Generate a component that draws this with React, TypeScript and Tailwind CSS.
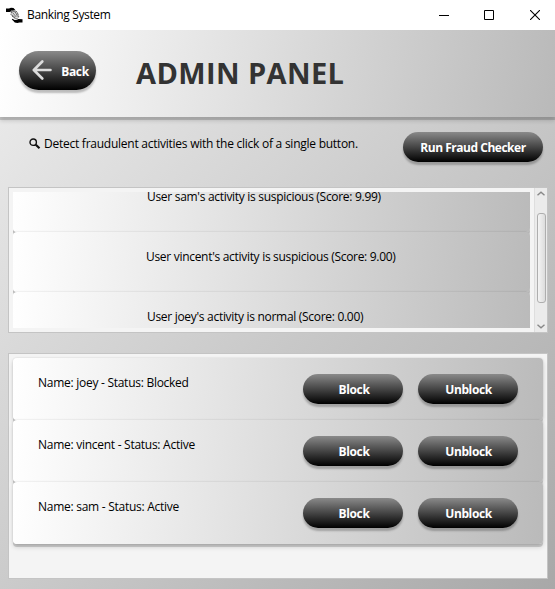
import React from 'react';

const pill =
  'flex shrink-0 items-center justify-center rounded-full bg-[linear-gradient(#8a8a8a,#000)] pt-[2px] font-bold leading-4 text-white shadow-[0_3px_2px_rgba(0,0,0,0.24)] whitespace-nowrap';

const rowShadow = 'shadow-[0_3px_0_rgba(0,0,0,0.15),0_3px_5px_rgba(0,0,0,0.16),0_0_2px_rgba(0,0,0,0.14)]';

function ArrowLeft() {
  return (
    <svg className="-mt-[3px]" width="20" height="20" viewBox="0 0 20 20" fill="none" stroke="#dcdcdc" strokeWidth="2.6" strokeLinecap="round" strokeLinejoin="round">
      <path d="M18.5 10H2M10.3 1.5 1.8 10l8.5 8.5" />
    </svg>
  );
}

function AppIcon() {
  return (
    <svg width="17" height="17" viewBox="0 0 17 17">
      <path d="M0 1.5h3l2-.8 2.5.3 1.8 2-1.3.8-2.5-.4-1 1.4L3.5 5H0z" fill="#000" />
      <path d="M5.5 4.5 8.5 3l2.8 2.3 1.5 4.5-2 2-3.3-1.2L5 7.5z" fill="#ddd" stroke="#333" strokeWidth=".8" strokeDasharray="2 .6" />
      <path d="m6.5 5.5 3.8 4.5M9 4.5l2.6 5M6 8l3 2.5M7 4.5l2.5.5" fill="none" stroke="#444" strokeWidth=".7" />
      <path d="m6.5 11.8 2.2 1.2 2.2-.2 1.5-.8 4.1.2v3.3h-3l-2.2.6-2.5-.5-1.6-1.8-1.4-1.2z" fill="#000" />
    </svg>
  );
}

function AccountRow({ name, status }: { name: string; status: string }) {
  return (
    <div className={`flex h-[62px] items-start rounded-[4px] bg-[linear-gradient(96.7deg,#fff,#bababa)] px-[25px] pt-[16px] ${rowShadow}`}>
      <span className="mt-[1px] whitespace-nowrap leading-4 tracking-[-0.27px]">{`Name: ${name} - Status: ${status}`}</span>
      <div className="ml-auto flex gap-[15px]">
        <button className={`${pill} h-[30px] w-[100px] pl-[2px] tracking-[-0.35px]`}>Block</button>
        <button className={`${pill} h-[30px] w-[100px] pl-[1px] tracking-[-0.4px]`}>Unblock</button>
      </div>
    </div>
  );
}

function ActivityRow({ text, pad }: { text: string; pad: string }) {
  return (
    <div className={`h-[60px] shrink-0 whitespace-nowrap rounded-[4px] bg-[linear-gradient(96.6deg,#fff,#bababa)] pt-[17px] leading-4 tracking-[-0.3px] ${rowShadow} ${pad}`}>
      {text}
    </div>
  );
}

export default function App() {
  return (
    <div className="flex h-[589px] w-[555px] flex-col overflow-hidden bg-white font-['Open_Sans','Noto_Sans',sans-serif] text-[12px] text-black">
      <div className="flex h-[30px] shrink-0 items-center pl-[6px] pr-[15px]">
        <AppIcon />
        <span className="ml-[4px] whitespace-nowrap leading-4 tracking-[-0.36px]">Banking System</span>
        <div className="ml-auto flex items-center">
          <svg width="10" height="10"><path d="M0 5.5h10" stroke="#000" /></svg>
          <svg className="ml-[35px]" width="10" height="10"><path d="M.5.5h9v9h-9z" fill="none" stroke="#000" /></svg>
          <svg className="ml-[36px]" width="10" height="10"><path d="m0 0 10 10M10 0 0 10" stroke="#000" strokeWidth="1.1" /></svg>
        </div>
      </div>
      <div className="flex h-[559px] shrink-0 flex-col bg-[linear-gradient(135deg,#eee,#a8a8a8)]">
        <header className="flex h-[87px] shrink-0 items-start bg-[linear-gradient(98.9deg,#fff,#b9b9b9)] pl-[19px] pt-[21px] shadow-[0_3px_0_rgba(0,0,0,0.14),0_4px_4px_rgba(0,0,0,0.14)]">
          <button className={`${pill} h-[39px] w-[77px] gap-[9px] pl-[6px] tracking-[-0.35px]`}>
            <ArrowLeft />
            Back
          </button>
          <h1 className="ml-[40px] mt-[2px] whitespace-nowrap text-[29px] font-bold leading-[40px] tracking-[0.4px] text-[#333]">ADMIN PANEL</h1>
        </header>
        <section className="flex h-[70px] shrink-0 items-start pl-[29px] pr-[12px] pt-[15px]">
          <svg className="mt-[6px] shrink-0" width="12" height="12" viewBox="0 0 12 12" fill="none" stroke="#111">
            <circle cx="4.2" cy="4.2" r="3.2" strokeWidth="1.4" />
            <path d="m6.8 6.8 3.7 3.5" strokeWidth="2.2" />
          </svg>
          <p className="ml-[3px] mt-[4px] whitespace-nowrap leading-4 tracking-[-0.25px]">Detect fraudulent activities with the click of a single button.</p>
          <button className={`${pill} ml-auto h-[30px] w-[140px] tracking-[-0.48px]`}>Run Fraud Checker</button>
        </section>
        <section className="ml-[8px] flex h-[146px] w-[540px] shrink-0 justify-between border border-[#c4c4c4] bg-[#f4f4f4]">
          <div className="ml-[4px] mt-[4px] flex h-[136px] w-[517px] flex-col overflow-hidden">
            <div className="-mt-[20px]">
              <ActivityRow text="User sam's activity is suspicious (Score: 9.99)" pad="pl-[134px]" />
              <ActivityRow text="User vincent's activity is suspicious (Score: 9.00)" pad="pl-[133px]" />
              <ActivityRow text="User joey's activity is normal (Score: 0.00)" pad="pl-[134px]" />
            </div>
          </div>
          <div className="flex w-[13px] flex-col items-center border-l border-[#dedede] bg-[#ebebeb] pt-[3px]">
            <svg width="8" height="5" fill="none" stroke="#888" strokeWidth="1.4"><path d="m.5 4.2 3.5-3 3.5 3" /></svg>
            <div className="mt-[17px] h-[90px] w-[9px] rounded-[3px] border border-[#aeaeae] bg-linear-to-r from-[#f4f4f4] to-[#dcdcdc]" />
            <svg className="mt-[21px]" width="8" height="5" fill="none" stroke="#888" strokeWidth="1.4"><path d="m.5.8 3.5 3 3.5-3" /></svg>
          </div>
        </section>
        <section className="ml-[8px] mt-[20px] h-[226px] w-[540px] shrink-0 border border-[#c4c4c4] bg-[#f4f4f4] pl-[4px] pt-[4px]">
          <div className="w-[530px]">
            <AccountRow name="joey" status="Blocked" />
            <AccountRow name="vincent" status="Active" />
            <AccountRow name="sam" status="Active" />
          </div>
        </section>
      </div>
    </div>
  );
}
